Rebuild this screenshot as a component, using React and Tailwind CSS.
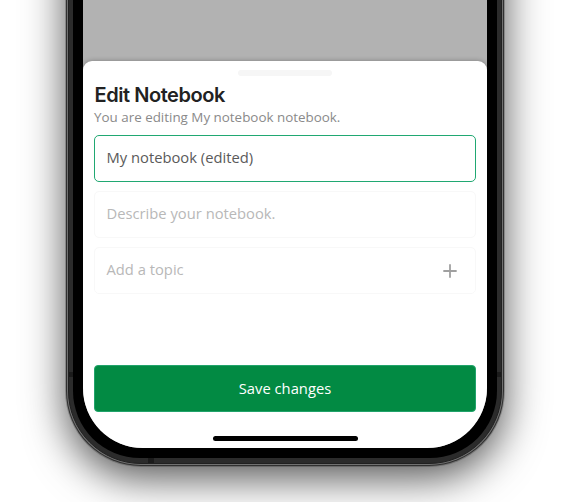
const field =
  "flex h-[47px] items-center justify-between rounded-[5px] border px-[11.5px] pb-[2px] text-[14.75px]";

function SideMark() {
  return <span className="h-[5px] w-[5px] bg-[#1b1b1b]" />;
}

export default function App() {
  return (
    <div className="flex h-[502px] w-[570px] justify-center overflow-hidden bg-white font-['Open_Sans','Noto_Sans',sans-serif] font-[370]">
      <div className="-mt-[80px] h-[546px] w-[438px] shrink-0 rounded-b-[75px] bg-[#303030] p-px shadow-[0_0_0_1px_rgba(0,0,0,0.2),0_12px_42px_rgba(0,0,0,0.68)]">
        <div className="h-full rounded-b-[74px] bg-[#707070] p-px">
          <div className="relative h-full rounded-b-[73px] border border-[#202020] bg-[#2b2b2b] px-[4px] pb-[5px]">
            <div className="absolute inset-x-0 top-[449px] flex justify-between">
              <SideMark />
              <SideMark />
            </div>
            <div className="absolute bottom-0 left-[79px] h-[5px] w-[6px] bg-[#1b1b1b]" />
            <div className="relative h-full rounded-b-[67px] bg-black px-[10px] pb-[10px]">
              <div className="flex h-full flex-col overflow-hidden rounded-b-[60px] bg-[#b2b2b2] pt-[138px]">
                <main className="flex flex-1 flex-col rounded-t-[9px] bg-white px-[11px] pt-[9px] shadow-[0_0_5px_rgba(0,0,0,0.3)]">
                  <div className="h-[6px] w-[94px] shrink-0 self-center rounded-full bg-[#f6f6f6]" />
                  <h1 className="mt-[7px] pl-[0.5px] font-['Inter',sans-serif] text-[20px] leading-[24px] font-semibold tracking-[-0.45px] text-[#222]">
                    Edit Notebook
                  </h1>
                  <p className="mt-px text-[13.4px] leading-[18px] text-[#8a8a8a]">
                    You are editing My notebook notebook.
                  </p>
                  <div className="mt-[9px] flex flex-col gap-[9px]">
                    <div className={`${field} border-[#20a872] text-[#5a5a5a]`}>
                      My notebook (edited)
                    </div>
                    <div className={`${field} border-[#f8f8f8] text-[#b8b8b8]`}>
                      Describe your notebook.
                    </div>
                    <div className={`${field} border-[#f8f8f8] text-[#b8b8b8]`}>
                      Add a topic
                      <svg
                        className="mr-[6.5px] size-[14px] translate-y-px"
                        viewBox="0 0 14 14"
                        fill="none"
                        stroke="#a0a0a0"
                        strokeWidth="1.8"
                        strokeLinecap="round"
                      >
                        <path d="M7 1v12M1 7h12" />
                      </svg>
                    </div>
                  </div>
                  <button className="mt-[70.5px] h-[47px] shrink-0 rounded-[4px] border border-[#21a36b] bg-[#028a43] text-[14.75px] text-white">
                    Save changes
                  </button>
                  <div className="mt-[24px] h-[5px] w-[145px] shrink-0 self-center rounded-full bg-black" />
                </main>
              </div>
            </div>
          </div>
        </div>
      </div>
    </div>
  );
}
